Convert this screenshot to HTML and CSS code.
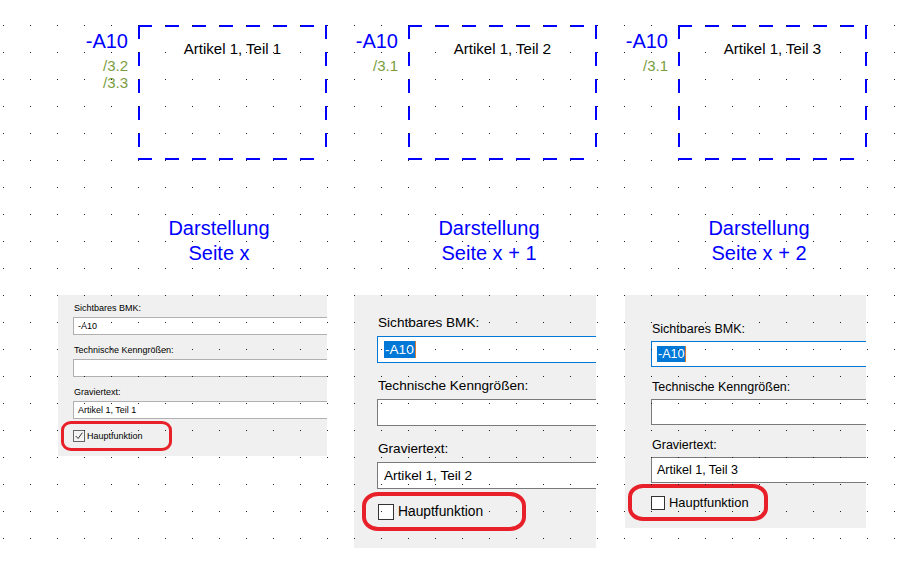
FILE: index.html
```html
<!DOCTYPE html>
<html lang="de">
<head>
  <meta charset="UTF-8" />
  <meta name="viewport" content="width=device-width, initial-scale=1.0" />
  <title>Darstellung BMK</title>
  <link rel="stylesheet" href="styles.css">
</head>
<body>
  <div class="sheet">
    <section class="col">
      <div class="mark">
        <div class="tag">
          <div class="tag-id">-A10</div>
          <div class="tag-ref">/3.2</div>
          <div class="tag-ref">/3.3</div>
        </div>
        <div class="box">Artikel 1, Teil 1</div>
      </div>
      <p class="caption">Darstellung<br>Seite x</p>
    </section>
    <section class="col">
      <div class="mark">
        <div class="tag">
          <div class="tag-id">-A10</div>
          <div class="tag-ref">/3.1</div>
        </div>
        <div class="box">Artikel 1, Teil 2</div>
      </div>
      <p class="caption">Darstellung<br>Seite x + 1</p>
    </section>
    <section class="col">
      <div class="mark">
        <div class="tag">
          <div class="tag-id">-A10</div>
          <div class="tag-ref">/3.1</div>
        </div>
        <div class="box">Artikel 1, Teil 3</div>
      </div>
      <p class="caption">Darstellung<br>Seite x + 2</p>
    </section>
  </div>

  <div class="shots">
    <div class="dlg dlg-1">
      <label class="lbl">Sichtbares BMK:</label>
      <div class="fld">-A10</div>
      <label class="lbl">Technische Kenngrößen:</label>
      <div class="fld"></div>
      <label class="lbl">Graviertext:</label>
      <div class="fld">Artikel 1, Teil 1</div>
      <div class="chk-row">
        <span class="chk">
          <svg viewBox="0 0 12 12" width="100%" height="100%"><polyline points="2,6 5,9 10,2" fill="none" stroke="#333" stroke-width="1.2"/></svg>
        </span>
        <span>Hauptfunktion</span>
      </div>
    </div>

    <div class="dlg dlg-2">
      <label class="lbl">Sichtbares BMK:</label>
      <div class="fld fld-focus"><span class="sel">-A10</span></div>
      <label class="lbl">Technische Kenngrößen:</label>
      <div class="fld"></div>
      <label class="lbl">Graviertext:</label>
      <div class="fld">Artikel 1, Teil 2</div>
      <div class="chk-row">
        <span class="chk"></span>
        <span>Hauptfunktion</span>
      </div>
    </div>

    <div class="dlg dlg-3">
      <label class="lbl">Sichtbares BMK:</label>
      <div class="fld fld-focus"><span class="sel">-A10</span></div>
      <label class="lbl">Technische Kenngrößen:</label>
      <div class="fld"></div>
      <label class="lbl">Graviertext:</label>
      <div class="fld">Artikel 1, Teil 3</div>
      <div class="chk-row">
        <span class="chk"></span>
        <span>Hauptfunktion</span>
      </div>
    </div>
  </div>
</body>
</html>
```

FILE: styles.css
```css
html, body {
  margin: 0;
  background: #fff;
}
body {
  width: 911px;
  height: 564px;
  overflow: hidden;
  font-family: "Liberation Sans", Arial, sans-serif;
  color: #000;
}
/* dot grid of the drawing canvas, drawn over everything */
body::after {
  content: "";
  position: fixed;
  inset: 0;
  pointer-events: none;
  background-image: conic-gradient(at 1px 1px, transparent 75%, #222 0);
  background-size: 27px 27px;
  background-position: 3px 25px;
}

.sheet {
  display: grid;
  grid-template-columns: repeat(3, 270px);
  padding: 25px 0 0 84px;
}
.mark {
  display: flex;
  gap: 10px;
}
.tag {
  width: 44px;
  padding-top: 4px;
  text-align: right;
  white-space: nowrap;
}
.tag-id {
  color: #0000ff;
  font-size: 20px;
  line-height: 24px;
}
.tag-ref {
  color: #7a9d3d;
  font-size: 15px;
  line-height: 17px;
}
.tag-id + .tag-ref {
  margin-top: 4px;
}
.box {
  width: 189px;
  height: 135px;
  box-sizing: border-box;
  padding-top: 15px;
  text-align: center;
  font-size: 15px;
  line-height: 18px;
  background:
    linear-gradient(90deg, #0000ff 14px, transparent 0) 0 0 / 27px 2px repeat-x,
    linear-gradient(90deg, #0000ff 14px, transparent 0) 0 100% / 27px 2px repeat-x,
    linear-gradient(#0000ff 14px, transparent 0) 0 0 / 2px 27px repeat-y,
    linear-gradient(#0000ff 14px, transparent 0) 100% 0 / 2px 27px repeat-y;
}
.caption {
  margin: 56px 0 0;
  text-align: center;
  color: #0000ff;
  font-size: 20px;
  line-height: 25px;
}

.shots {
  display: flex;
  align-items: flex-start;
  margin-top: 29px;
  padding-left: 58px;
}
.dlg {
  box-sizing: border-box;
  background: #f0f0f0;
  overflow: hidden;
}
.dlg-1 {
  width: 269px;
  padding: 8px 0 5px 15px;
  font-size: 9px;
  --lh: 11px;
  --ih: 18px;
  --lab-gap: 3px;
  --fld-gap: 10px;
  --fpad: 4px;
}
.dlg-2 {
  width: 242px;
  margin-left: 27px;
  padding: 20px 0 17px 23px;
  font-size: 13.6px;
  --lh: 16px;
  --ih: 27px;
  --lab-gap: 5px;
  --fld-gap: 15px;
  --fpad: 6px;
}
.dlg-3 {
  width: 241px;
  margin-left: 29px;
  padding: 27px 0 7px 26px;
  font-size: 12.5px;
  --lh: 15px;
  --ih: 26px;
  --lab-gap: 4px;
  --fld-gap: 13px;
  --fpad: 5px;
}
.lbl {
  display: block;
  line-height: var(--lh);
  margin: 0 0 var(--lab-gap) 1px;
  white-space: nowrap;
}
.fld {
  height: var(--ih);
  box-sizing: border-box;
  display: flex;
  align-items: center;
  margin: 0 -2px var(--fld-gap) 0;
  padding-left: var(--fpad);
  background: #fff;
  border: 1px solid #7a7a7a;
  white-space: nowrap;
}
.dlg-1 .fld {
  border-color: #b0b0b0;
}
.fld-focus {
  border-color: #0078d7;
}
.sel {
  padding: 0 1px;
  line-height: 1.3;
  background: #0078d7;
  color: #fff;
  border-right: 1px solid #d9782f;
}

.chk-row {
  display: flex;
  align-items: center;
  box-sizing: border-box;
  border: 3px solid #e8202a;
  white-space: nowrap;
}
.dlg-1 .chk-row {
  width: 111px;
  height: 30px;
  margin: -8px 0 0 -12px;
  padding-left: 9px;
  gap: 2px;
  border-radius: 10px / 9px;
}
.dlg-2 .chk-row {
  width: 164px;
  height: 39px;
  margin: -12px 0 0 -15px;
  padding-left: 12px;
  gap: 4px;
  font-size: 13.8px;
  border-width: 4px;
  border-radius: 16px / 14px;
}
.dlg-3 .chk-row {
  width: 140px;
  height: 37px;
  margin: -12px 0 0 -23px;
  padding-left: 19px;
  gap: 4px;
  font-size: 12.9px;
  border-width: 4px;
  border-radius: 15px / 13px;
}
.chk {
  display: block;
  box-sizing: border-box;
  background: #fff;
  border: 1px solid #333;
}
.dlg-1 .chk {
  width: 12px;
  height: 12px;
  border-color: #666;
  background: #f4f4f4;
}
.dlg-2 .chk {
  width: 16px;
  height: 16px;
}
.dlg-3 .chk {
  width: 14px;
  height: 14px;
}
```
